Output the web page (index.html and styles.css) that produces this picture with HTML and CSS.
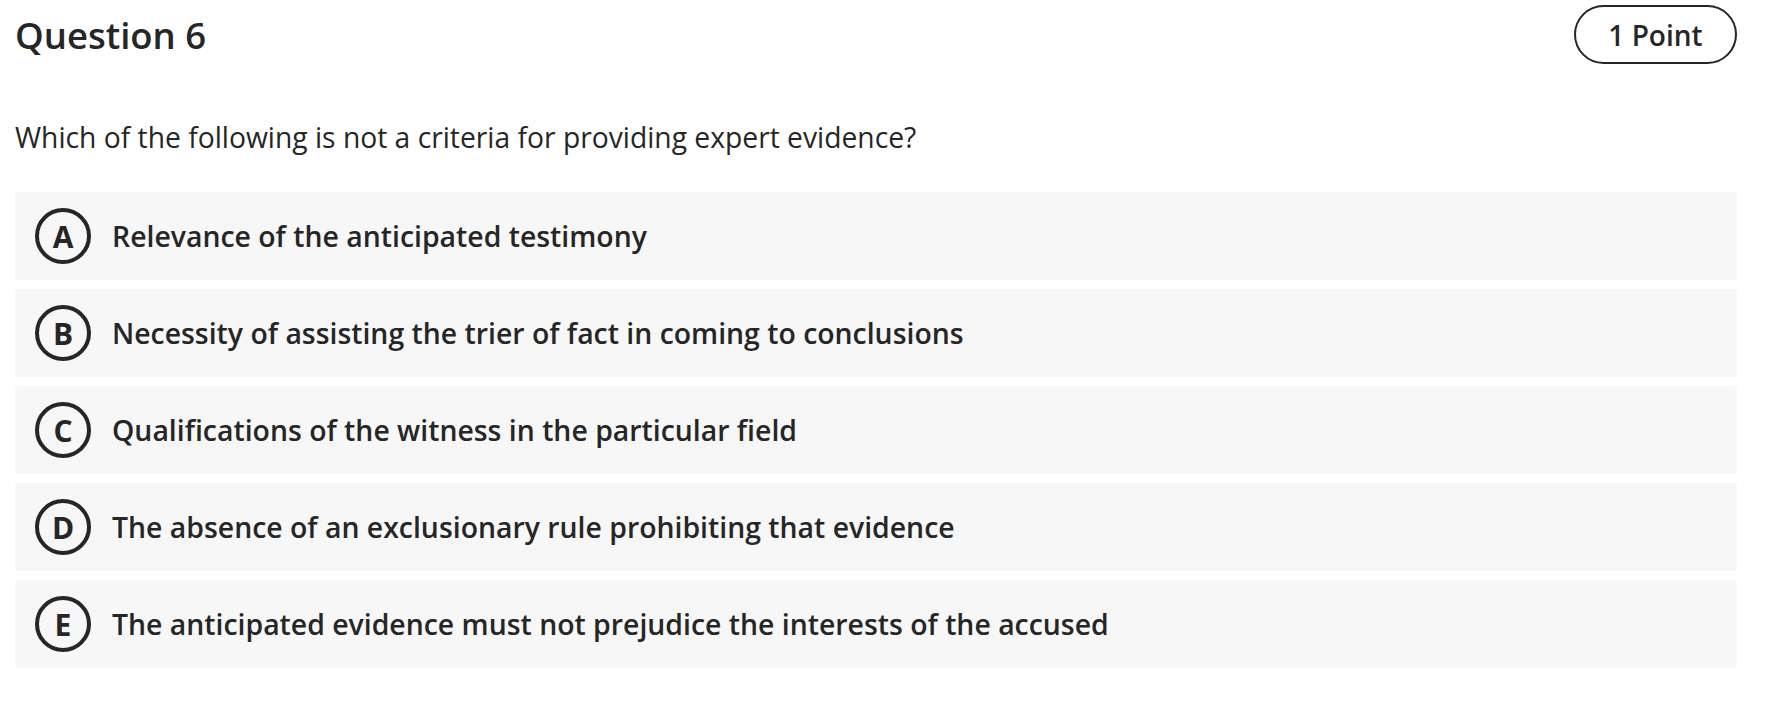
FILE: index.html
```html
<!DOCTYPE html>
<html>
<head>
<meta charset="utf-8">
<link rel="stylesheet" href="styles.css">
</head>
<body>
<div class="page">
  <div class="header">
    <h1 class="title">Question 6</h1>
    <div class="points">1 Point</div>
  </div>
  <p class="prompt">Which of the following is not a criteria for providing expert evidence?</p>
  <div class="options">
    <div class="option"><span class="letter">A</span><span class="label">Relevance of the anticipated testimony</span></div>
    <div class="option"><span class="letter">B</span><span class="label">Necessity of assisting the trier of fact in coming to conclusions</span></div>
    <div class="option"><span class="letter">C</span><span class="label">Qualifications of the witness in the particular field</span></div>
    <div class="option"><span class="letter">D</span><span class="label">The absence of an exclusionary rule prohibiting that evidence</span></div>
    <div class="option"><span class="letter">E</span><span class="label">The anticipated evidence must not prejudice the interests of the accused</span></div>
  </div>
</div>
</body>
</html>
```
FILE: styles.css
```css
html, body {
  margin: 0;
  padding: 0;
  background: #ffffff;
}
body {
  font-family: "Open Sans", "Noto Sans", sans-serif;
  color: #262626;
}
.page {
  padding: 5px 29px 0 15px;
}
.header {
  display: flex;
  justify-content: space-between;
  align-items: center;
}
.title {
  margin: 0;
  font-size: 36.5px;
  font-weight: 600;
  line-height: 52px;
  color: #262626;
}
.points {
  box-sizing: border-box;
  height: 59px;
  width: 163px;
  border: 2px solid #262626;
  border-radius: 30px;
  display: flex;
  align-items: center;
  justify-content: center;
  font-size: 28px;
  font-weight: 600;
}
.prompt {
  margin: 54px 0 0 0;
  font-size: 28.25px;
  line-height: 38px;
  font-weight: 400;
}
.options {
  margin-top: 36px;
  display: flex;
  flex-direction: column;
  gap: 9px;
}
.option {
  height: 88px;
  background: #f7f7f7;
  border-radius: 4px;
  display: flex;
  align-items: center;
  padding-left: 20px;
  gap: 21px;
}
.letter {
  box-sizing: border-box;
  width: 56px;
  height: 56px;
  border: 4px solid #262626;
  border-radius: 50%;
  display: flex;
  align-items: center;
  justify-content: center;
  font-size: 30px;
  font-weight: 700;
  flex: none;
}
.label {
  font-size: 28.4px;
  font-weight: 600;
  line-height: 38px;
}
```
